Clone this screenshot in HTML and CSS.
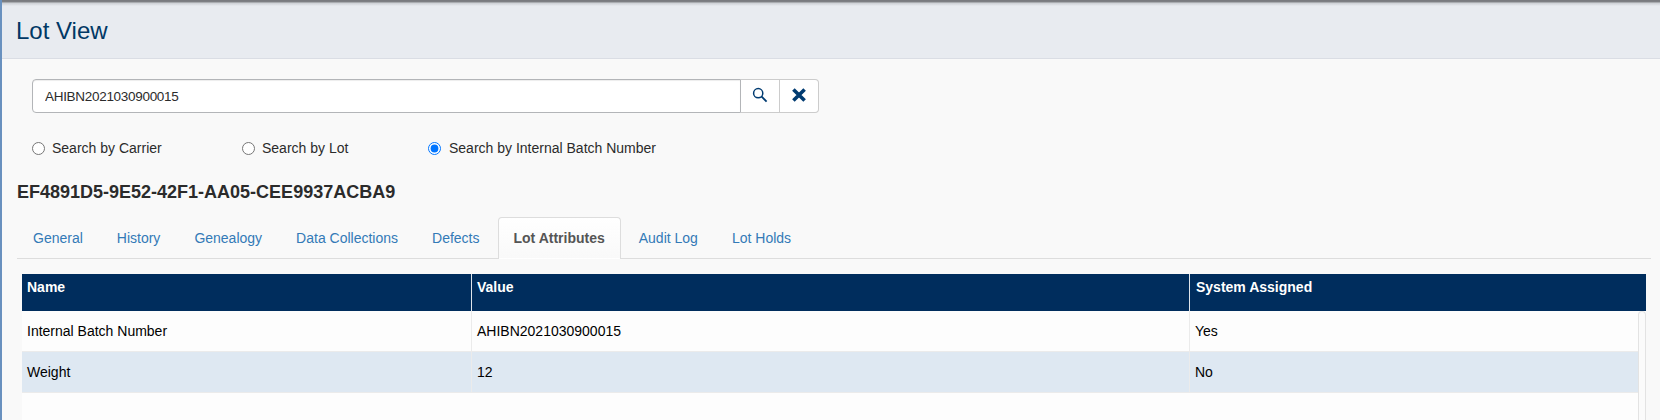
FILE: index.html
```html
<!DOCTYPE html>
<html lang="en">
<head>
<meta charset="utf-8">
<title>Lot View</title>
<link rel="stylesheet" href="styles.css">
</head>
<body>
<div class="page">
  <header class="page-header"><h1 class="page-title">Lot View</h1></header>
  <main class="content">
    <div class="search-group">
      <input class="search-input" type="text" value="AHIBN2021030900015" aria-label="Search">
      <button class="search-btn" aria-label="Search"><svg width="16" height="16" viewBox="0 0 16 16"><circle cx="6.2" cy="6.2" r="4.6" fill="none" stroke="#003b71" stroke-width="1.5"/><path d="M9.4 9.4L14.6 14.6" stroke="#003b71" stroke-width="1.9"/></svg></button>
      <button class="search-btn search-btn-last" aria-label="Clear"><svg width="16" height="16" viewBox="0 0 16 16"><path d="M2.4 2.4L13.6 13.6M13.6 2.4L2.4 13.6" stroke="#003b71" stroke-width="3.6"/></svg></button>
    </div>
    <div class="radios">
      <label class="radio radio-carrier"><input class="radio-input" type="radio" name="by">Search by Carrier</label>
      <label class="radio radio-lot"><input class="radio-input" type="radio" name="by">Search by Lot</label>
      <label class="radio radio-batch"><input class="radio-input" type="radio" name="by" checked>Search by Internal Batch Number</label>
    </div>
    <h2 class="lot-id">EF4891D5-9E52-42F1-AA05-CEE9937ACBA9</h2>
    <nav class="tabs">
      <a class="tab">General</a>
      <a class="tab">History</a>
      <a class="tab">Genealogy</a>
      <a class="tab">Data Collections</a>
      <a class="tab">Defects</a>
      <a class="tab tab-active">Lot Attributes</a>
      <a class="tab">Audit Log</a>
      <a class="tab">Lot Holds</a>
    </nav>
    <section class="grid">
      <div class="grid-head">
        <div class="head-cell">Name</div>
        <div class="head-cell">Value</div>
        <div class="head-cell">System Assigned</div>
      </div>
      <div class="grid-body">
        <div class="rows">
          <div class="row"><div class="cell">Internal Batch Number</div><div class="cell">AHIBN2021030900015</div><div class="cell">Yes</div></div>
          <div class="row row-alt"><div class="cell">Weight</div><div class="cell">12</div><div class="cell">No</div></div>
        </div>
        <div class="scroll-track"></div>
      </div>
    </section>
  </main>
</div>
</body>
</html>
```
FILE: styles.css
```css
* { box-sizing: border-box; }
body {
  margin: 0;
  overflow: hidden;
  background: #f9f9f9;
  color: #2b2b2b;
  font: 14px/20px "Liberation Sans", Arial, sans-serif;
}
.page {
  display: flex;
  flex-direction: column;
  height: 420px;
  border-left: 2px solid #6991bf;
}
.page-header {
  height: 59px;
  padding: 15px 14px 0;
  border-bottom: 1px solid #dadde4;
  background: linear-gradient(#77797d 0, #7d7f83 1.5px, #a9acb0 2.5px, #d0d3d8 3.5px, #e8ebf0 6px);
}
.page-title { margin: 0; color: #003865; font-size: 24px; line-height: 32px; font-weight: 400; }
.content {
  display: flex;
  flex: 1;
  flex-direction: column;
  min-height: 0;
  padding: 20px 9px 0 15px;
}
.search-group { display: flex; width: 787px; height: 34px; margin-left: 15px; }
.search-input {
  width: 709px;
  padding: 1px 12px 0;
  border: 1px solid #b3b5b8;
  border-radius: 4px 0 0 4px;
  background: #fff;
  box-shadow: inset 0 1px 1px rgba(0, 0, 0, .075);
  color: #2b2b2b;
  font: inherit;
  font-size: 13.5px;
  letter-spacing: -.3px;
}
.search-btn {
  display: flex;
  justify-content: center;
  width: 39px;
  padding: 7px 0 0;
  border: 1px solid #ccc;
  border-left: 0;
  background: #fff;
}
.search-btn-last { border-radius: 0 4px 4px 0; }
.radios { display: flex; margin: 25px 0 0 15px; }
.radio { display: flex; align-items: center; height: 20px; }
.radio-input { width: 13px; height: 13px; margin: 1px 7px 0 0; }
.radio-carrier { width: 210px; }
.radio-lot { width: 186px; }
.radio-batch .radio-input { margin-right: 8px; }
.lot-id { margin: 24px 0 15px; font-size: 18px; line-height: 20px; font-weight: 700; }
.tabs { display: flex; height: 42px; flex: none; border-bottom: 1px solid #ddd; }
.tab {
  height: 42px;
  margin-right: 2px;
  padding: 10px 15px;
  border: 1px solid transparent;
  border-radius: 4px 4px 0 0;
  color: #337ab7;
}
.tab-active {
  border-color: #ddd #ddd transparent;
  background: linear-gradient(#fff, #f9f9f9);
  color: #555;
  font-weight: 700;
}
.grid { display: flex; flex: 1; flex-direction: column; margin: 15px 5px 0; color: #000; }
.grid-head, .row { display: grid; grid-template-columns: 450px 718px 1fr; }
.grid-head { height: 37px; background: #002d5d; color: #fff; font-weight: 700; }
.head-cell { padding: 3px 5px; border-right: 1px solid #dfe4ea; }
.head-cell:last-child { padding-left: 6px; border-right: 0; }
.grid-body { display: flex; flex: 1; background: #fdfdfd; }
.rows { flex: 1; }
.row { height: 41px; border-bottom: 1px solid #ebebeb; }
.row-alt { background: #dee8f2; }
.cell { padding: 10px 5px; border-right: 1px solid #ebebeb; }
.cell:last-child { border-right: 0; }
.scroll-track {
  width: 8px;
  border: 1px solid #e3e3e3;
  border-bottom: 0;
  border-radius: 4px 4px 0 0;
  background: #fbfbfb;
}
```
